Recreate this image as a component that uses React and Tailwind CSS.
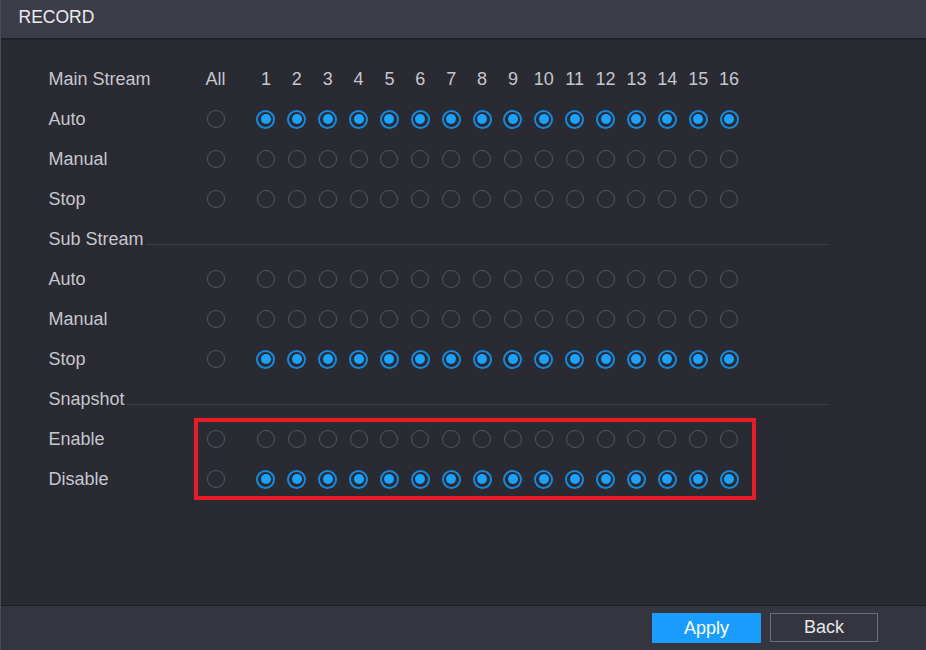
import React from "react";

const CH = Array.from({ length: 16 }, (_, i) => i + 1);

function Radio({ on }) {
  if (on) {
    return (
      <div className="w-[19px] h-[19px] rounded-full border-2 border-[#1789dc] flex items-center justify-center">
        <div className="w-[10px] h-[10px] rounded-full bg-[#1ca2ff]" />
      </div>
    );
  }
  return <div className="w-[18px] h-[18px] rounded-full border border-[#55565f]" />;
}

function Row({ label, allOn = false, on = false }) {
  return (
    <div className="flex items-center h-10">
      <div className="w-[150px] text-[18px] text-[#c6c6cc] pt-[1px]">{label}</div>
      <div className="w-[34px] flex justify-center">
        <Radio on={allOn} />
      </div>
      <div className="w-[18px]" />
      {CH.map((c) => (
        <div key={c} className="w-[30.875px] flex justify-center">
          <Radio on={on} />
        </div>
      ))}
    </div>
  );
}

function Section({ label }) {
  return (
    <div className="flex items-center h-10 w-[779px]">
      <div className="text-[18px] text-[#c6c6cc] pr-[2px] pt-[1px]">{label}</div>
      <div className="flex-1 h-px bg-[#3d3e49] mt-[10px]" />
    </div>
  );
}

export default function App() {
  return (
    <div
      className="w-[926px] h-[650px] flex flex-col bg-[#2a2a33] border-l-[1.5px] border-[#4a4b58]"
      style={{ fontFamily: '"Liberation Sans", Arial, sans-serif' }}
    >
      <div className="h-[40px] shrink-0 bg-[#3b3c47] border-b-2 border-[#1f2028] flex items-center pl-[17.5px] pb-[3px]">
        <span className="text-[17.5px] text-[#ececef]">RECORD</span>
      </div>
      <div className="flex-1 pt-[19px] pl-[47.5px]">
        <div className="flex items-center h-10 text-[18px] text-[#c6c6cc] pt-[1px]">
          <div className="w-[150px]">Main Stream</div>
          <div className="w-[34px] text-center">All</div>
          <div className="w-[18px]" />
          {CH.map((c) => (
            <div key={c} className="w-[30.875px] text-center">
              {c}
            </div>
          ))}
        </div>
        <Row label="Auto" on />
        <Row label="Manual" />
        <Row label="Stop" />
        <Section label="Sub Stream" />
        <Row label="Auto" />
        <Row label="Manual" />
        <Row label="Stop" on />
        <Section label="Snapshot" />
        <div className="relative">
          <Row label="Enable" />
          <Row label="Disable" on />
          <div className="absolute left-[145px] top-[-1px] w-[562px] h-[82px] border-4 border-[#e81c26]" />
        </div>
      </div>
      <div className="h-[45px] shrink-0 bg-[#34353f] border-t border-[#1c1d23] flex items-start justify-end pr-[48px] pt-[7px] gap-[9px]">
        <button className="w-[109px] h-[30px] bg-[#1a9cff] text-white text-[18px] flex items-center justify-center">
          Apply
        </button>
        <button className="w-[108px] h-[29px] border border-[#6c6d75] text-[#e6e6ea] text-[18px] flex items-center justify-center">
          Back
        </button>
      </div>
    </div>
  );
}
